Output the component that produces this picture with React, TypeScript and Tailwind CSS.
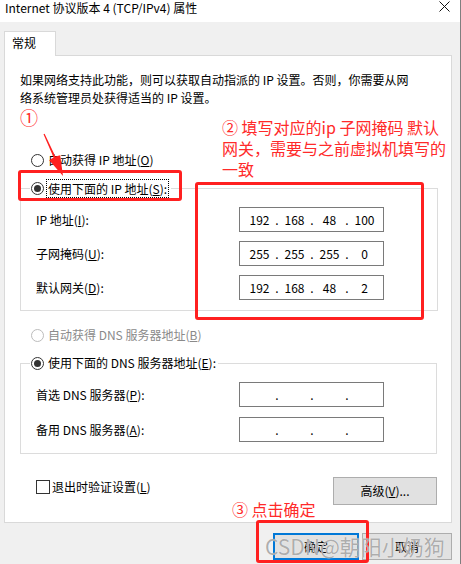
import { Fragment } from 'react';

function Radio({ checked, disabled }: { checked?: boolean; disabled?: boolean }) {
  return (
    <span
      className={`flex h-[13px] w-[13px] shrink-0 items-center justify-center rounded-full border bg-white ${
        disabled ? 'border-[#bcbcbc]' : 'border-[#333333]'
      }`}
    >
      {checked && <span className="h-[7px] w-[7px] rounded-full bg-[#333333]" />}
    </span>
  );
}

function IpBox({ parts }: { parts: string[] }) {
  return (
    <div className="flex h-[25px] w-[145px] items-center border border-[#7a7a7a] bg-white pl-[4px] leading-[16px]">
      {parts.map((p, i) => (
        <Fragment key={i}>
          {i > 0 && <span className="w-[4px] text-center">.</span>}
          <span className="w-[31px] text-center">{p}</span>
        </Fragment>
      ))}
    </div>
  );
}

function FieldRow({ label, parts }: { label: React.ReactNode; parts: string[] }) {
  return (
    <div className="flex h-[25px] items-center">
      <span className="w-[203px]">{label}</span>
      <IpBox parts={parts} />
    </div>
  );
}

export default function App() {
  return (
    <div className="relative h-[564px] w-[461px] overflow-hidden border-r border-[#7f7f7f] bg-[#f0f0f0] font-['Noto_Sans_CJK_SC',sans-serif] text-[12px] leading-[18px] text-black">
      {/* title bar */}
      <div className="flex h-[22px] justify-between bg-white pl-[5px] pr-[10px]">
        <span className="leading-[16px]">Internet 协议版本 4 (TCP/IPv4) 属性</span>
        <svg width="11" height="11" viewBox="0 0 11 11" className="mt-[1px]">
          <path d="M0.5 0.5 L10.5 10.5 M10.5 0.5 L0.5 10.5" stroke="#111" strokeWidth="1" />
        </svg>
      </div>

      <div className="pl-[4px] pr-[8px] pt-[9px]">
        <div className="relative z-10 -mb-px h-[25px] w-[52px] border border-b-0 border-[#d9d9d9] bg-white pl-[7px] pt-[2px]">
          常规
        </div>
        <div className="h-[468px] border border-[#d9d9d9] bg-white">
          <p className="pl-[15px] pt-[15px]">
            如果网络支持此功能，则可以获取自动指派的 IP 设置。否则，你需要从网
            <br />
            络系统管理员处获得适当的 IP 设置。
          </p>

          <div className="mt-[43px] flex h-[20px] items-center gap-[4px] pl-[26px]">
            <Radio />
            <span>
              自动获得 IP 地址(<u>O</u>)
            </span>
          </div>

          <fieldset className="ml-[15px] mt-[8px] w-[418px] border border-[#dcdcdc] px-[15px] pb-[10px]">
            <legend className="-ml-[6px] bg-white pl-[1px] pr-[2px]">
              <div className="flex h-[20px] items-center">
                <Radio checked />
                <span className="ml-[2px] border border-dotted border-black px-[1px] leading-[17px]">
                  使用下面的 IP 地址(<u>S</u>):
                </span>
              </div>
            </legend>
            <div className="flex flex-col gap-[9px] pt-[9px]">
              <FieldRow
                label={
                  <>
                    IP 地址(<u>I</u>):
                  </>
                }
                parts={['192', '168', '48', '100']}
              />
              <FieldRow
                label={
                  <>
                    子网掩码(<u>U</u>):
                  </>
                }
                parts={['255', '255', '255', '0']}
              />
              <FieldRow
                label={
                  <>
                    默认网关(<u>D</u>):
                  </>
                }
                parts={['192', '168', '48', '2']}
              />
            </div>
          </fieldset>

          <div className="mt-[14px] flex h-[20px] items-center gap-[4px] pl-[26px] text-[#8a8a8a]">
            <Radio disabled />
            <span>
              自动获得 DNS 服务器地址(<u>B</u>)
            </span>
          </div>

          <fieldset className="ml-[15px] mt-[8px] w-[417px] border border-[#dcdcdc] px-[15px] pb-[11px]">
            <legend className="-ml-[6px] bg-white pl-[1px] pr-[2px]">
              <div className="flex h-[20px] items-center gap-[4px]">
                <Radio checked />
                <span>
                  使用下面的 DNS 服务器地址(<u>E</u>):
                </span>
              </div>
            </legend>
            <div className="flex flex-col gap-[10px] pt-[9px]">
              <FieldRow
                label={
                  <>
                    首选 DNS 服务器(<u>P</u>):
                  </>
                }
                parts={['', '', '', '']}
              />
              <FieldRow
                label={
                  <>
                    备用 DNS 服务器(<u>A</u>):
                  </>
                }
                parts={['', '', '', '']}
              />
            </div>
          </fieldset>

          <div className="mt-[23px] flex items-start justify-between pl-[31px] pr-[14px]">
            <div className="mt-[1px] flex items-center gap-[2px]">
              <span className="h-[14px] w-[14px] border border-[#333333] bg-white" />
              <span>
                退出时验证设置(<u>L</u>)
              </span>
            </div>
            <button className="flex h-[28px] w-[104px] items-center justify-center border border-[#adadad] bg-[#e1e1e1]">
              高级(<u>V</u>)...
            </button>
          </div>
        </div>
      </div>

      <div className="mt-[10px] flex justify-end gap-[3px] pr-[8px]">
        <button className="flex h-[27px] w-[86px] items-center justify-center border-2 border-[#0078d7] bg-[#e1e1e1]">
          确定
        </button>
        <button className="flex h-[27px] w-[90px] items-center justify-center border border-[#adadad] bg-[#e1e1e1]">
          取消
        </button>
      </div>

      {/* annotations */}
      <span className="absolute left-[20px] top-[108px] text-[18px] leading-[18px] text-[#ff2a2a]">①</span>
      <svg className="pointer-events-none absolute left-0 top-0" width="461" height="564">
        <polygon
          points="43.5,134.2 53.6,157.4 49.2,160.2 63,176 60.2,155.2 55.4,156.6 44.6,133.8"
          fill="#ff2020"
        />
      </svg>
      <div className="absolute left-[18px] top-[170px] h-[31px] w-[164px] rounded-[3px] border-[3px] border-[#ff2020]" />
      <div className="absolute left-[195px] top-[182px] h-[138px] w-[229px] rounded-[3px] border-[3px] border-[#ff2020]" />
      <div className="absolute left-[256px] top-[520px] h-[43px] w-[113px] rounded-[3px] border-[3px] border-[#ff2020]" />
      <div className="absolute left-[222px] top-[117px] text-[16px] leading-[21px] text-[#ff2a2a]">
        ② 填写对应的ip 子网掩码 默认
        <br />
        网关，需要与之前虚拟机填写的
        <br />
        一致
      </div>
      <div className="absolute left-[232px] top-[499px] text-[16px] leading-[21px] text-[#ff2a2a]">③ 点击确定</div>
      <div className="absolute left-[265px] top-[532px] text-[21px] leading-[28px] text-[#8a8a8a]/70 [text-shadow:0_0_1px_#fff]">
        CSDN@朝阳小奶狗
      </div>
    </div>
  );
}
